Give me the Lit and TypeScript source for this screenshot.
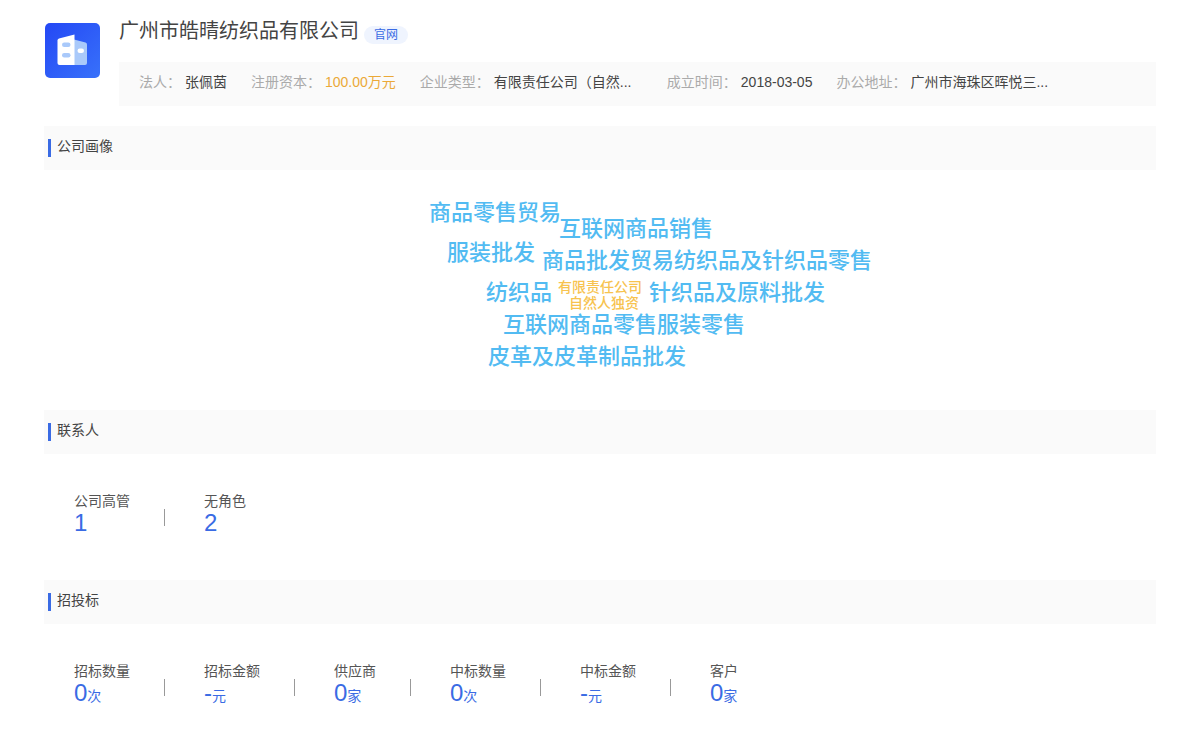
import { LitElement, html, css, nothing } from "lit";
import { customElement, property } from "lit/decorators.js";
import { styleMap } from "lit/directives/style-map.js";

interface Fact {
  label: string;
  value: string;
  kind?: "money" | "wide";
}

interface Stat {
  label: string;
  value: string;
  unit?: string;
}

interface Word {
  text: string;
  x: number;
  y: number;
  minor?: boolean;
}

const FACTS: Fact[] = [
  { label: "法人：", value: "张佩茵" },
  { label: "注册资本：", value: "100.00万元", kind: "money" },
  { label: "企业类型：", value: "有限责任公司（自然...", kind: "wide" },
  { label: "成立时间：", value: "2018-03-05" },
  { label: "办公地址：", value: "广州市海珠区晖悦三...", kind: "wide" },
];

// Offsets are measured from the top centre of the cloud.
const WORDS: Word[] = [
  { text: "商品零售贸易", x: -171, y: 27 },
  { text: "互联网商品销售", x: -41, y: 43 },
  { text: "服装批发", x: -153, y: 67 },
  { text: "商品批发贸易纺织品及针织品零售", x: -58, y: 75 },
  { text: "纺织品", x: -114, y: 107 },
  { text: "有限责任公司", x: -42, y: 107, minor: true },
  { text: "自然人独资", x: -31, y: 123, minor: true },
  { text: "针织品及原料批发", x: 49, y: 107 },
  { text: "互联网商品零售服装零售", x: -97, y: 139 },
  { text: "皮革及皮革制品批发", x: -112, y: 171 },
];

const CONTACTS: Stat[] = [
  { label: "公司高管", value: "1" },
  { label: "无角色", value: "2" },
];

const BIDS: Stat[] = [
  { label: "招标数量", value: "0", unit: "次" },
  { label: "招标金额", value: "-", unit: "元" },
  { label: "供应商", value: "0", unit: "家" },
  { label: "中标数量", value: "0", unit: "次" },
  { label: "中标金额", value: "-", unit: "元" },
  { label: "客户", value: "0", unit: "家" },
];

@customElement("section-title")
export class SectionTitle extends LitElement {
  static styles = css`
    :host {
      display: block;
    }
    .title {
      display: flex;
      align-items: center;
      gap: 6px;
      height: 44px;
      margin: 0;
      padding: 0 4px;
      background: #fafafa;
      color: #444;
      font-size: 14px;
      font-weight: 400;
      line-height: 20px;
    }
    .title::before {
      content: "";
      width: 3px;
      height: 18px;
      background: #3a6be4;
    }
    .text {
      padding-bottom: 4px;
    }
  `;

  render() {
    return html`<h2 class="title"><span class="text"><slot></slot></span></h2>`;
  }
}

@customElement("stat-list")
export class StatList extends LitElement {
  @property({ attribute: false }) items: Stat[] = [];

  static styles = css`
    :host {
      display: block;
    }
    .list {
      display: flex;
      flex-wrap: wrap;
      margin: 0;
      padding: 36px 30px 44px;
    }
    .stat {
      display: flex;
      flex-direction: column;
    }
    .rule {
      width: 1px;
      height: 17px;
      margin: 19px 39px 0 34px;
      background: #999;
    }
    .label {
      color: #555;
      font-size: 14px;
      line-height: 22px;
    }
    .value {
      margin: 0;
      padding-bottom: 2px;
      color: #3a6be4;
      font-size: 24px;
      line-height: 22px;
    }
    .unit {
      font-size: 14px;
    }
  `;

  render() {
    return html`<dl class="list">
      ${this.items.map(
        (s, i) => html`${i ? html`<div class="rule"></div>` : nothing}
          <div class="stat">
            <dt class="label">${s.label}</dt>
            <dd class="value">${s.value}${s.unit ? html`<span class="unit">${s.unit}</span>` : nothing}</dd>
          </div>`
      )}
    </dl>`;
  }
}

@customElement("word-cloud")
export class WordCloud extends LitElement {
  static styles = css`
    :host {
      display: block;
    }
    .cloud {
      position: relative;
      height: 240px;
    }
    .word {
      position: absolute;
      color: #52bbf2;
      font-size: 22px;
      font-weight: 500;
      line-height: 32px;
      white-space: nowrap;
    }
    .minor {
      color: #f7c34f;
      font-size: 14px;
      line-height: 20px;
    }
  `;

  render() {
    return html`<div class="cloud">
      ${WORDS.map(
        (w) => html`<span
          class=${w.minor ? "word minor" : "word"}
          style=${styleMap({ left: `calc(50% + ${w.x}px)`, top: `${w.y}px` })}
          >${w.text}</span
        >`
      )}
    </div>`;
  }
}

@customElement("app-root")
export class AppRoot extends LitElement {
  static styles = css`
    :host {
      display: block;
      box-sizing: border-box;
      min-height: 100vh;
      padding: 18px 44px 0;
      background: #fff;
      font-family: "Liberation Sans", "Noto Sans CJK SC", sans-serif;
    }
    .company {
      display: flex;
      gap: 19px;
      margin-bottom: 20px;
    }
    .logo {
      flex: none;
      width: 56px;
      height: 56px;
      margin-top: 4px;
    }
    .info {
      flex: 1;
      min-width: 0;
    }
    .heading {
      display: flex;
      align-items: flex-end;
      gap: 5px;
      height: 26px;
      margin-bottom: 18px;
    }
    .name {
      margin: 0;
      color: #444;
      font-size: 20px;
      font-weight: 400;
      line-height: 26px;
    }
    .site {
      padding: 0 10px;
      border-radius: 9px;
      background: #eff4fe;
      color: #3a6be4;
      font-size: 12px;
      line-height: 18px;
      text-decoration: none;
    }
    .facts {
      display: flex;
      flex-wrap: wrap;
      gap: 0 24px;
      margin: 0;
      padding: 10px 20px 14px;
      background: #fafafa;
      font-size: 14px;
      line-height: 20px;
    }
    .fact {
      display: flex;
      gap: 4px;
    }
    .key {
      color: #aaa;
    }
    .val {
      margin: 0;
      color: #444;
    }
    .money {
      color: #eba938;
    }
    .wide {
      width: 149px;
      white-space: nowrap;
    }
  `;

  render() {
    return html`
      <header class="company">
        <svg class="logo" viewBox="0 0 56 56" aria-hidden="true">
          <defs>
            <linearGradient id="tile" x1="0" y1="0" x2="1" y2="1">
              <stop offset="0" stop-color="#2448f5" />
              <stop offset="1" stop-color="#3871fa" />
            </linearGradient>
          </defs>
          <rect x="1" y="1" width="55" height="55" rx="5" fill="url(#tile)" />
          <path d="M30 17.5 41.5 20.5Q43 21 43 22.500V41Q43 43 41 43H30Z" fill="#a9c9fa" />
          <path d="M15 16.500Q13.500 17 13.500 18.500V41Q13.500 43 15.500 43H30.500V12.500Z" fill="#fff" />
          <rect x="18" y="20.500" width="8.500" height="4.500" rx="2.200" fill="#a9c9fa" />
          <rect x="18" y="31" width="8.500" height="4.500" rx="2.200" fill="#a9c9fa" />
          <rect x="33.500" y="26.500" width="6.500" height="4.500" rx="2.200" fill="#fff" />
        </svg>
        <div class="info">
          <div class="heading">
            <h1 class="name">广州市皓晴纺织品有限公司</h1>
            <a class="site" href="#">官网</a>
          </div>
          <dl class="facts">
            ${FACTS.map(
              (f) => html`<div class="fact">
                <dt class="key">${f.label}</dt>
                <dd class="val ${f.kind ?? ""}">${f.value}</dd>
              </div>`
            )}
          </dl>
        </div>
      </header>
      <section>
        <section-title>公司画像</section-title>
        <word-cloud></word-cloud>
      </section>
      <section>
        <section-title>联系人</section-title>
        <stat-list .items=${CONTACTS}></stat-list>
      </section>
      <section>
        <section-title>招投标</section-title>
        <stat-list .items=${BIDS}></stat-list>
      </section>
    `;
  }
}
